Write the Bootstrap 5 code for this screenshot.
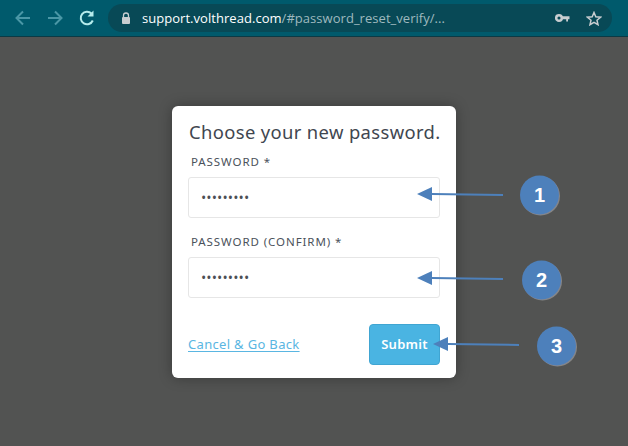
<!DOCTYPE html>
<html lang="en">
<head>
<meta charset="utf-8">
<title>Choose your new password</title>
<link href="https://cdn.jsdelivr.net/npm/bootstrap@5.3.0/dist/css/bootstrap.min.css" rel="stylesheet">
<style>
html,body{height:446px;overflow:hidden}
body{background:#525352;font-family:"Open Sans","Noto Sans",sans-serif;position:relative;width:628px}
.chrome-bar{height:37px;background:#005a6c;border-bottom:1px solid #0b3a45;padding:4px 16px 0 14px;align-items:flex-start}
.nav-icons{gap:14px;padding-top:5px;width:94px}
.url-pill{width:504px;height:28px;background:#084956;border-radius:14px;padding:0 10px 0 13px;font-family:"Open Sans",sans-serif;font-size:13px;color:#9fb9bf}
.url-host{color:#fff}
.url-text{margin-left:11px;letter-spacing:.04px;line-height:28px;white-space:nowrap}
.page-area{height:409px;padding-top:69px}
.reset-card{width:284px;height:272px;border:0;border-radius:6px;padding:16px 16px 13px;box-shadow:0 0 14px rgba(0,0,0,.3)}
.reset-title{font-family:"Noto Sans",sans-serif;font-size:18.4px;line-height:20px;color:#3f4650;letter-spacing:.02em;font-weight:400;margin:0 0 0 1px;white-space:nowrap}
.field-label{font-family:"Noto Sans",sans-serif;font-size:11.5px;line-height:14px;color:#4b525b;letter-spacing:.08em;margin:13px 0 8px 3px;display:block;white-space:nowrap}
.field-box{height:41px;border:1px solid #e6e6e6;border-radius:3px;font-size:14px;padding:0 12px;color:#4c4f55;letter-spacing:.1px;box-shadow:none}
.field-gap{margin-top:17px}
.card-foot{margin-top:26px}
.back-link{font-family:"Noto Sans",sans-serif;font-size:13px;color:#5ab6e2;letter-spacing:.025em;text-underline-offset:2px;white-space:nowrap}
.send-btn{width:71px;height:41px;background:#4ab4e2;border:1px solid #40a5d2;border-radius:4px;color:#fff;font-family:"Noto Sans",sans-serif;font-weight:600;font-size:13px;letter-spacing:.02em;padding:0}
.notes{position:absolute;left:0;top:0;pointer-events:none}
.notes text{font-family:"Liberation Sans",sans-serif;font-weight:700;font-size:20px;fill:#fff;text-anchor:middle}
</style>
</head>
<body>
<div class="chrome-bar d-flex">
  <div class="nav-icons d-flex">
    <svg width="18" height="18" viewBox="0 0 18 18" fill="none" stroke="#4a97a6" stroke-width="2"><path d="M16 9H2.500M9 2.500 2.500 9 9 15.500"/></svg>
    <svg width="18" height="18" viewBox="0 0 18 18" fill="none" stroke="#4a97a6" stroke-width="2"><path d="M2 9h13.500M9 2.500 15.500 9 9 15.500"/></svg>
    <svg width="18" height="18" viewBox="0 0 18 18" fill="none" stroke="#b5ecec" stroke-width="2"><path d="M14.800 11.500A6.300 6.300 0 1 1 13.500 4.500"/><path d="M15.500 1.500v6h-6z" fill="#b5ecec" stroke="none"/></svg>
  </div>
  <div class="url-pill d-flex align-items-center">
    <svg width="10" height="13" viewBox="0 0 10 13"><path d="M2.500 5V3.500a2.500 2.500 0 0 1 5 0V5" fill="none" stroke="#c8cdd0" stroke-width="1.300"/><rect x="1" y="5" width="8" height="7" rx="1" fill="#c8cdd0"/></svg>
    <span class="url-text flex-grow-1"><span class="url-host">support.volthread.com</span>/#password_reset_verify/...</span>
    <svg class="me-3" width="15" height="10" viewBox="0 0 15 10"><circle cx="4" cy="5" r="2.800" fill="none" stroke="#c8cdd0" stroke-width="2.500"/><path d="M6 3.300h8.500v3H13V8.500h-1.800V6.300H6z" fill="#c8cdd0"/></svg>
    <svg width="16" height="15" viewBox="0 0 16 15" fill="none" stroke="#c8cdd0" stroke-width="1.500"><path d="M8 1.500 9.800 5.800 14.500 6.200 11 9.200 12 13.700 8 11.300 4 13.700 5 9.200 1.500 6.200 6.200 5.800z"/></svg>
  </div>
</div>
<main class="page-area d-flex justify-content-center align-items-start">
  <form class="reset-card card">
    <h1 class="reset-title">Choose your new password.</h1>
    <label class="field-label" for="p1">PASSWORD *</label>
    <input id="p1" class="field-box form-control" type="password" value="password1">
    <label class="field-label field-gap" for="p2">PASSWORD (CONFIRM) *</label>
    <input id="p2" class="field-box form-control" type="password" value="password1">
    <div class="card-foot d-flex justify-content-between align-items-center">
      <a class="back-link" href="#">Cancel &amp; Go Back</a>
      <button type="button" class="send-btn btn">Submit</button>
    </div>
  </form>
</main>
<svg class="notes" width="628" height="446" viewBox="0 0 628 446">
  <defs><filter id="sh" x="-20%" y="-20%" width="150%" height="150%"><feDropShadow dx="1" dy="1" stdDeviation=".5" flood-color="#8a8a8a" flood-opacity=".9"/></filter></defs>
  <g fill="#4d80bb" stroke="#4d80bb">
    <path d="M503 195 432 194" stroke-width="2" fill="none"/><path d="M417 194 432 187V201z" stroke="none"/>
    <path d="M503 279 432 278" stroke-width="2" fill="none"/><path d="M417 278 432 271V285z" stroke="none"/>
    <path d="M519 345 448 344" stroke-width="2" fill="none"/><path d="M433 344 448 337V351z" stroke="none"/>
  </g>
  <g fill="#4d80bb" filter="url(#sh)">
    <circle cx="539.500" cy="195" r="19.500"/><circle cx="541.500" cy="280" r="19.500"/><circle cx="556.500" cy="346" r="19.500"/>
  </g>
  <text x="539.500" y="202">1</text><text x="541.500" y="287">2</text><text x="556.500" y="353">3</text>
</svg>
<script src="https://cdn.jsdelivr.net/npm/bootstrap@5.3.0/dist/js/bootstrap.bundle.min.js"></script>
</body>
</html>
